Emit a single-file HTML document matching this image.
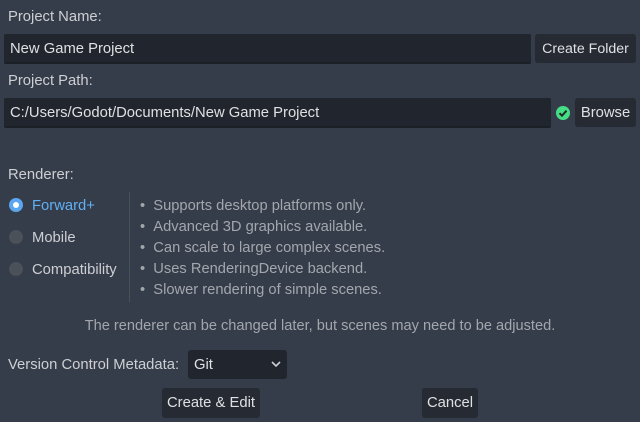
<!DOCTYPE html>
<html><head><style>
body{margin:0;width:640px;height:422px;background:#363d4a;font-family:"Liberation Sans",sans-serif;font-size:14.8px;color:#cdcfd2;position:relative;overflow:hidden}
.a{position:absolute;white-space:nowrap}
.in{position:absolute;background:#21262e;border-bottom:2px solid #1b1f26;box-sizing:border-box;border-radius:2px;padding-left:6px;line-height:30px;color:#dfe0e2}
.bt{position:absolute;background:#252a33;border-radius:3px;text-align:center;line-height:31px;color:#dfe0e2}
.r{position:absolute;width:14px;height:14px;border-radius:50%;background:#4b5059}
.g{color:#a3a7ad}
</style></head><body>
<div class="a" style="left:8px;top:9px">Project Name:</div>
<div class="in" style="left:4px;top:34px;width:527px;height:30px">New Game Project</div>
<div class="bt" style="left:535px;top:34px;width:101px;height:29px;font-size:14.2px">Create Folder</div>
<div class="a" style="left:8px;top:73px">Project Path:</div>
<div class="in" style="left:4px;top:98px;width:547px;height:30px">C:/Users/Godot/Documents/New Game Project</div>
<svg class="a" style="left:555px;top:105px" width="16" height="16"><circle cx="8" cy="8" r="7" fill="#45de86"/><path d="M4.5 8.2l2.5 2.5 4.5-5" stroke="#1f2a24" stroke-width="2" fill="none"/></svg>
<div class="bt" style="left:575px;top:98px;width:61px;height:29px">Browse</div>
<div class="a" style="left:8px;top:167px">Renderer:</div>
<div class="r" style="left:9px;top:198px;background:#fff;box-sizing:border-box;border:4px solid #5aa7ef"></div>
<div class="a" style="left:32px;top:198px;color:#5fb0f5">Forward+</div>
<div class="r" style="left:9px;top:230px"></div>
<div class="a" style="left:32px;top:230px">Mobile</div>
<div class="r" style="left:9px;top:262px"></div>
<div class="a" style="left:32px;top:262px">Compatibility</div>
<div class="a" style="left:129px;top:192px;width:1px;height:110px;background:#4a505b"></div>
<div class="a g" style="left:140px;top:196px;line-height:21px;font-size:14.7px">• &nbsp;Supports desktop platforms only.<br>• &nbsp;Advanced 3D graphics available.<br>• &nbsp;Can scale to large complex scenes.<br>• &nbsp;Uses RenderingDevice backend.<br>• &nbsp;Slower rendering of simple scenes.</div>
<div class="a g" style="left:0;width:640px;text-align:center;top:318px;font-size:14.6px">The renderer can be changed later, but scenes may need to be adjusted.</div>
<div class="a" style="left:8px;top:357px">Version Control Metadata:</div>
<div class="bt" style="left:188px;top:350px;width:99px;height:29px;text-align:left;padding-left:6px;box-sizing:border-box;background:#21262e">Git<svg style="position:absolute;right:6px;top:11px" width="10" height="7"><path d="M1 1l4 4 4-4" stroke="#cdcfd2" stroke-width="1.6" fill="none"/></svg></div>
<div class="bt" style="left:162px;top:388px;width:98px;height:30px">Create &amp; Edit</div>
<div class="bt" style="left:422px;top:388px;width:56px;height:30px">Cancel</div>
</body></html>
